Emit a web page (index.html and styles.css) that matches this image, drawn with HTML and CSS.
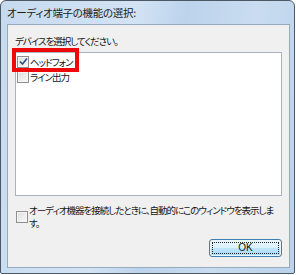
FILE: index.html
```html
<!DOCTYPE html>
<html lang="ja">
<head>
<meta charset="utf-8">
<link rel="stylesheet" href="styles.css">
</head>
<body>
<div class="window">
  <div class="titlebar"><span class="title">オーディオ端子の機能の選択:</span></div>
  <div class="client">
    <p class="prompt">デバイスを選択してください。</p>
    <div class="list">
      <div class="item">
        <span class="cb checked"><svg viewBox="0 0 9 9" width="9" height="9"><path d="M1 4.5 L3.5 7 L8 1.5" fill="none" stroke="#2b4e83" stroke-width="1.6"/></svg></span>
        <span class="label">ヘッドフォン</span>
      </div>
      <div class="item">
        <span class="cb"></span>
        <span class="label">ライン出力</span>
      </div>
      <div class="highlight"></div>
    </div>
    <div class="auto">
      <span class="cb"></span>
      <span class="auto-text">オーディオ機器を接続したときに、自動的にこのウィンドウを表示しま<br>す。</span>
    </div>
    <div class="actions">
      <button class="btn"><span class="btn-focus">OK</span></button>
    </div>
  </div>
</div>
</body>
</html>
```
FILE: styles.css
```css
* { box-sizing: border-box; }
html, body { margin: 0; padding: 0; background: #ffffff; }
body {
  width: 296px; height: 275px; overflow: hidden;
  font-family: "Noto Sans CJK JP", "Noto Sans", sans-serif;
  color: #141414;
}
.window {
  width: 295px; height: 274px;
  border: 1px solid #4d5866;
  border-radius: 6px 6px 2px 2px;
  background: linear-gradient(100deg, #c6daef 0%, #d3e3f4 40%, #bcd3ec 55%, #c9dcf0 75%, #bad2eb 100%);
  padding: 0 4px 5px 6px;
  display: flex; flex-direction: column;
}
.titlebar {
  height: 23px;
  display: flex; align-items: center;
}
.title {
  font-size: 10.5px; color: #1b1b1b;
  font-variant-east-asian: proportional-width;
  font-feature-settings: "palt" 1;
  letter-spacing: -0.3px;
}
.client {
  flex: 1;
  background: #f0f0f0;
  border: 1px solid #98a9bb;
  padding: 10px 7px 0 7px;
  display: flex; flex-direction: column;
}
.prompt, .item, .auto-text {
  font-size: 9.5px;
  font-variant-east-asian: proportional-width;
  font-feature-settings: "palt" 1;
  letter-spacing: -1px;
}
.prompt { margin: 0; line-height: 12px; }
.list {
  position: relative;
  margin-top: 5px;
  height: 144px;
  background: #ffffff;
  border: 1px solid #abb3bd;
  padding: 1px 1px;
}
.item { display: flex; align-items: center; height: 15px; gap: 1px; }
.cb {
  width: 12px; height: 12px; flex: none;
  border: 1px solid #8e8f8f;
  background: linear-gradient(135deg, #dcdcdc, #fbfbfb);
  box-shadow: inset 0 0 0 1px #f4f4f4;
  display: flex; align-items: center; justify-content: center;
}
.label { line-height: 12px; }
.highlight {
  position: absolute;
  left: -4px; top: -5px;
  width: 67px; height: 24px;
  border: 4px solid #ee0a0a;
}
.auto {
  display: flex; align-items: center; gap: 1px;
  margin-top: 8px; padding-left: 1px;
}
.auto-text { line-height: 13px; }
.actions { display: flex; justify-content: flex-end; margin-top: 9px; }
.btn {
  width: 73px; height: 18px; padding: 2px;
  border: 1px solid #3c7fb1;
  border-radius: 3px;
  background: linear-gradient(to bottom, #eaf6fd 0%, #d9f0fc 50%, #bee6fd 51%, #a7d9f5 100%);
  box-shadow: inset 0 0 0 1px #e8f4fb;
  font-family: "Liberation Sans", sans-serif; font-size: 10px; color: #111;
  display: flex;
}
.btn-focus {
  flex: 1; border: 1px dotted #222;
  display: flex; align-items: center; justify-content: center;
  line-height: 10px;
}
```
